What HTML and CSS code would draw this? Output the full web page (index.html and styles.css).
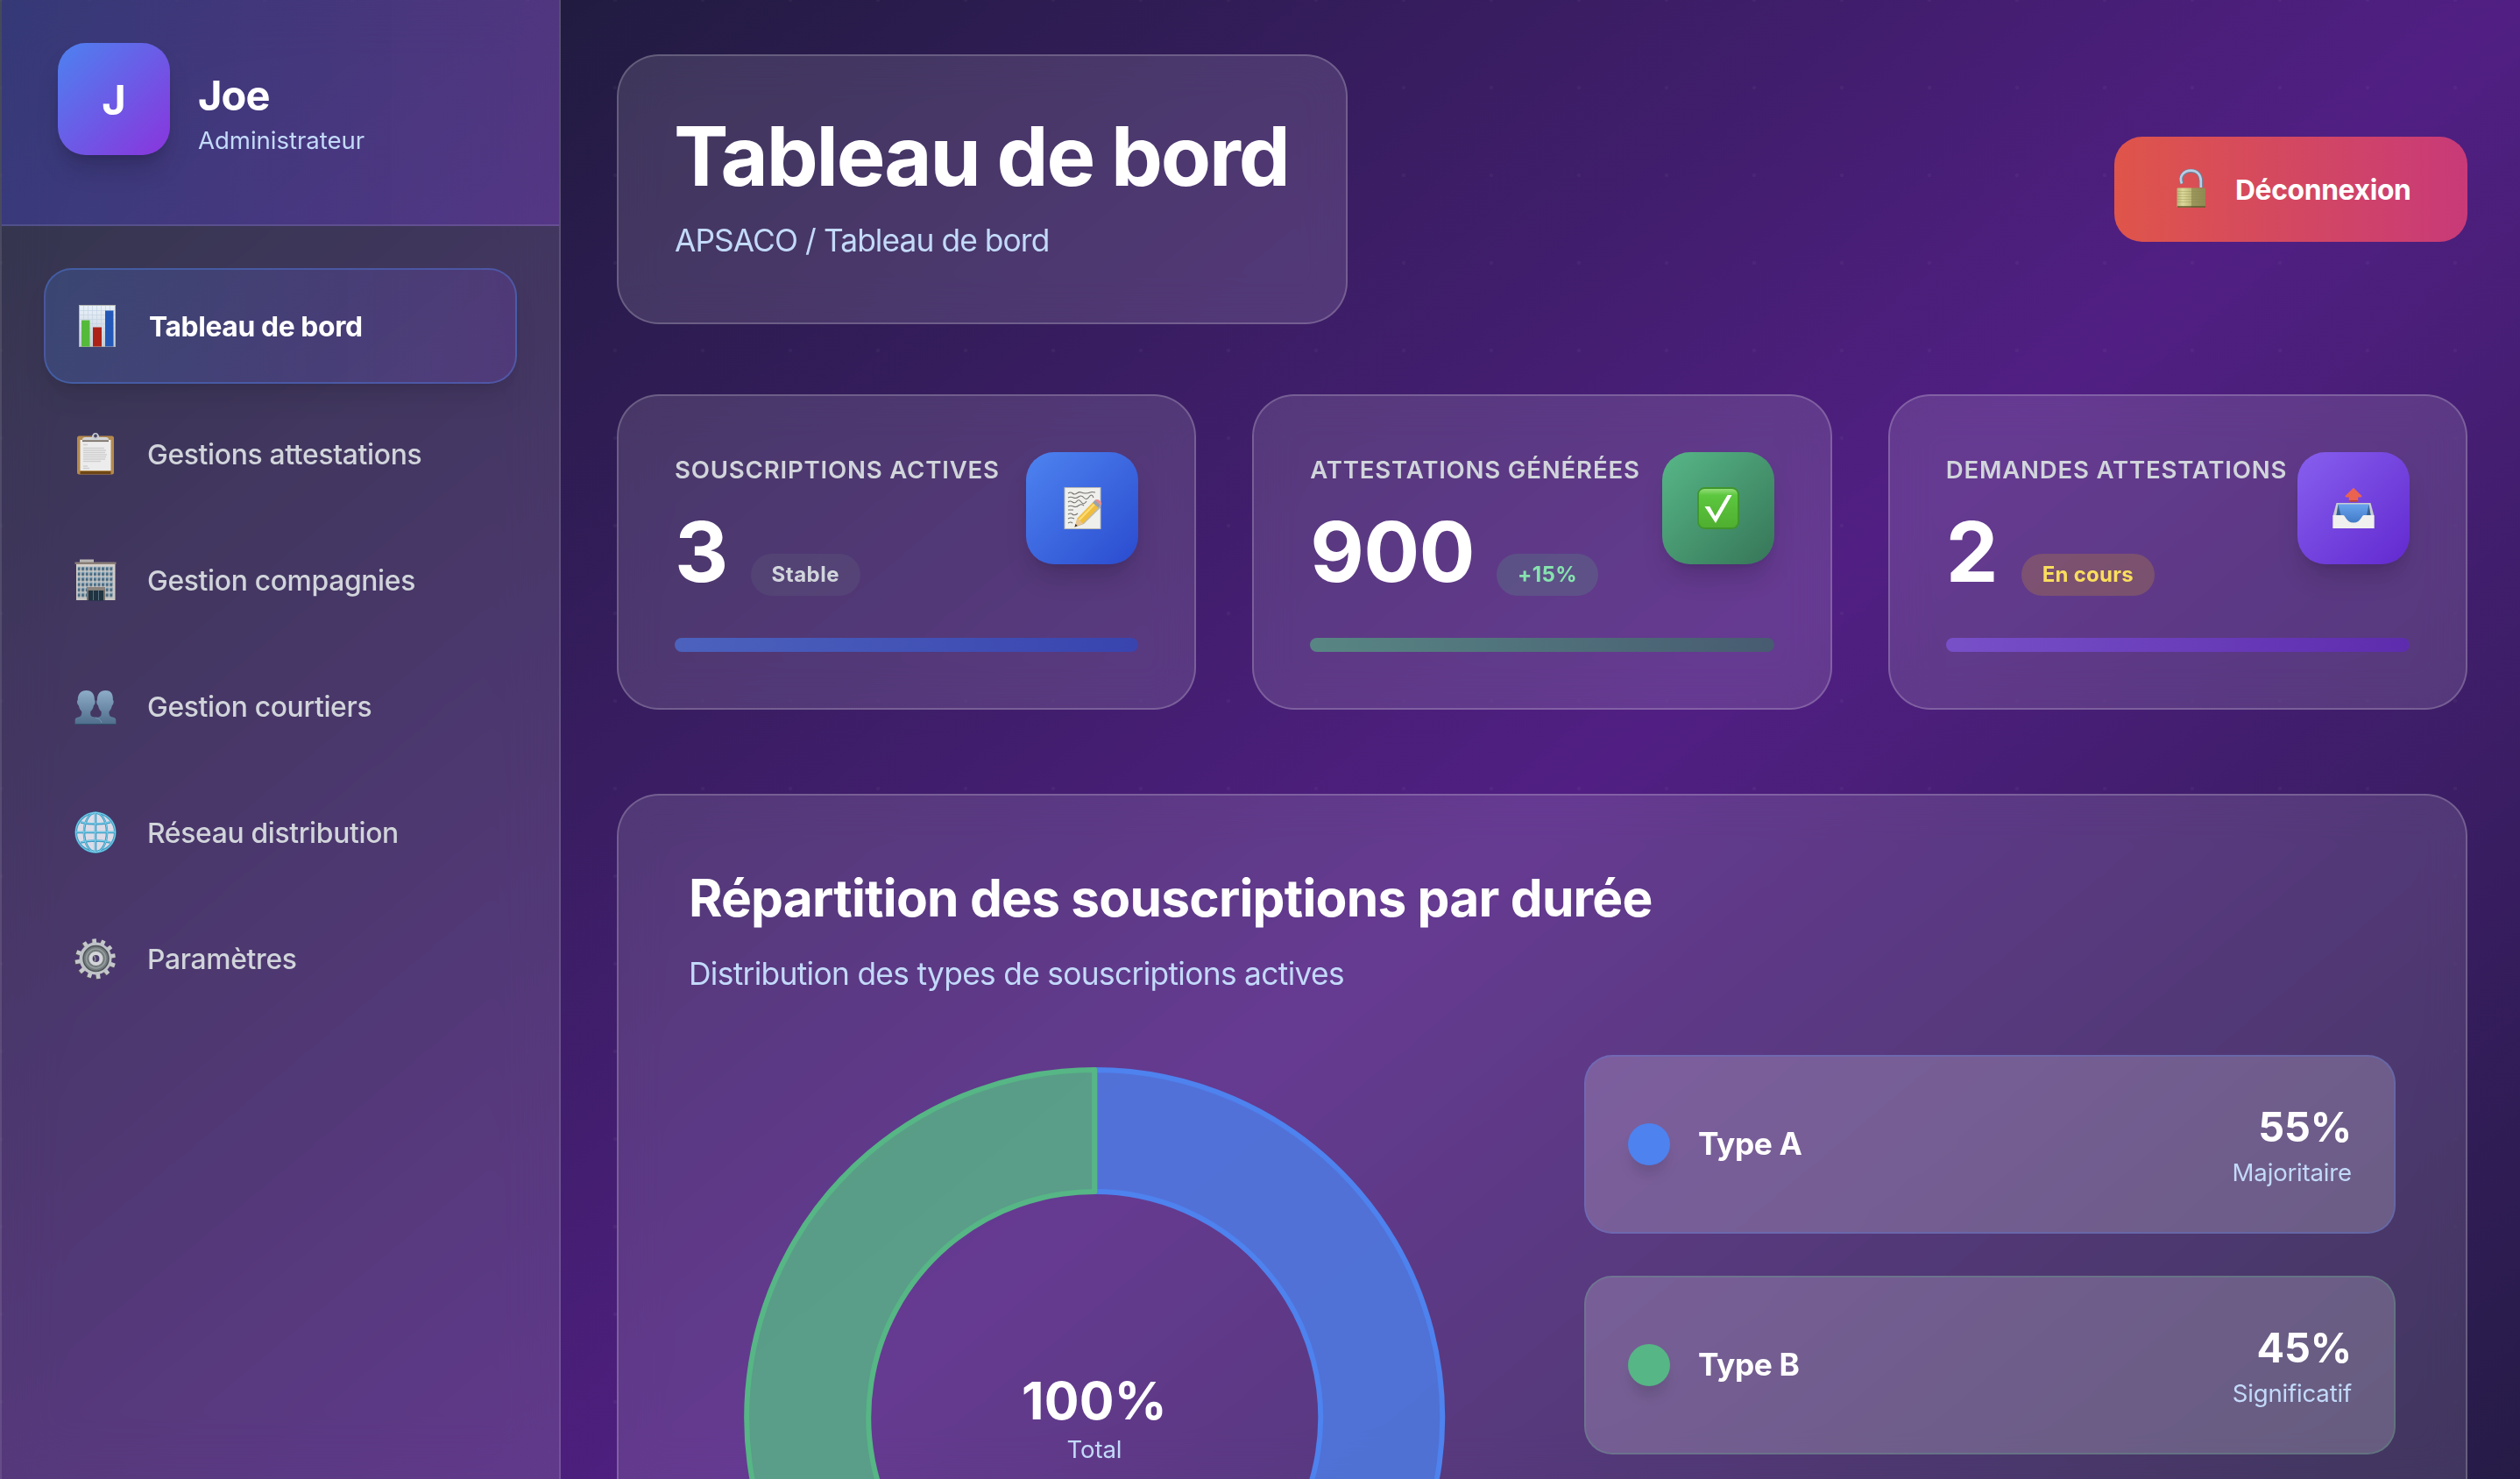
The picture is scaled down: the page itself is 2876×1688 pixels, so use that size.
FILE: index.html
```html
<!DOCTYPE html>
<html lang="fr">
<head>
<meta charset="utf-8">
<title>Tableau de bord</title>
<link rel="stylesheet" href="styles.css">
</head>
<body>
<div class="app">
  <aside class="sidebar">
    <div class="profile">
      <div class="avatar">J</div>
      <div class="profile-info">
        <div class="profile-name">Joe</div>
        <div class="profile-role">Administrateur</div>
      </div>
    </div>
    <nav class="nav">
      <a class="nav-item active">
        <svg class="emoji" viewBox="0 0 48 48">
          <defs><linearGradient id="paper" x1="0" y1="0" x2="0" y2="1"><stop offset="0" stop-color="#e9f1f9"/><stop offset="1" stop-color="#c3ccd6"/></linearGradient></defs>
          <rect x="3.5" y=".5" width="41" height="47" fill="url(#paper)" stroke="#b3b3ae"/>
          <path d="M8.500 1v46M13.500 1v46M18.500 1v46M23.500 1v46M28.500 1v46M33.500 1v46M38.500 1v46M4 6.500h40M4 11.500h40M4 16.500h40M4 21.500h40M4 26.500h40M4 31.500h40M4 36.500h40M4 41.500h40" stroke="#c4d4e4" stroke-width=".7"/>
          <rect x="6" y="17.500" width="9.500" height="30" fill="#55ba3a"/>
          <rect x="19" y="25.500" width="10" height="22" fill="#ad2217"/>
          <rect x="33" y="6.500" width="9.500" height="41" fill="#2458b8"/>
        </svg>
        <span>Tableau de bord</span>
      </a>
      <a class="nav-item">
        <svg class="emoji" viewBox="0 0 48 48">
          <rect x="3" y="3.500" width="42" height="44" rx="2.500" fill="#b58a4d"/>
          <rect x="6.500" y="44" width="35" height="3" fill="#6f4716"/>
          <path d="M6.500 8h35v35h-35z" fill="#ececec"/>
          <path d="M10 13.500h5M10 17.500h24M10 20h26M10 22.500h25M10 25h27M10 27.500h26M10 30h25M10 32.500h20M10 38h5M10 40.500h7" stroke="#cfcfcf" stroke-width="1.300"/>
          <path d="M9 10h30V7.500Q39 5 35.500 5H28a4 4 0 0 0-8 0h-7.500Q9 5 9 7.500z" fill="#d2d3d6"/>
          <path d="M9 9.300h30" stroke="#6e6258" stroke-width="1.600"/>
          <circle cx="24" cy="3.500" r="2.700" fill="#4a4560" stroke="#c5c8d0" stroke-width="1.600"/>
        </svg>
        <span>Gestions attestations</span>
      </a>
      <a class="nav-item">
        <svg class="emoji" viewBox="0 0 48 48">
          <defs>
            <linearGradient id="wall" x1="0" y1="0" x2="0" y2="1"><stop offset="0" stop-color="#d5d0c9"/><stop offset="1" stop-color="#c9c7c5"/></linearGradient>
            <pattern id="win" width="4.600" height="6" patternUnits="userSpaceOnUse" x="3.500" y="8.500"><rect width="3.100" height="4.600" fill="#426680"/><rect width="3.100" height="1.300" fill="#86abc4"/></pattern>
          </defs>
          <rect x="6" y=".5" width="16" height="4" fill="#b9b7b5"/>
          <rect x="2" y="5" width="44.500" height="42" fill="url(#wall)"/>
          <rect x=".5" y="3.500" width="47" height="2.500" fill="#8a7f78"/>
          <rect x="3.500" y="8.500" width="41.200" height="36" fill="url(#win)"/>
          <rect x="14" y="32" width="21" height="15" fill="#76706c"/>
          <rect x="14" y="32" width="21" height="3.500" fill="#8b837d"/>
          <path d="M16 36h17v11.500H16z" fill="#1f3340"/>
          <path d="M21.500 36v11M27.500 36v11" stroke="#587080" stroke-width="1"/>
        </svg>
        <span>Gestion compagnies</span>
      </a>
      <a class="nav-item">
        <svg class="emoji people" viewBox="0 0 48 48">
          <defs><linearGradient id="bust" gradientUnits="userSpaceOnUse" x1="0" y1="5" x2="0" y2="43"><stop offset="0" stop-color="#8cabc6"/><stop offset="1" stop-color="#4f6d8c"/></linearGradient></defs>
          <path d="M13.500 4C7 4 3.600 8.500 3.800 15c-1.300.6-.9 5 1 6.200.7 3.600 2 5.300 3.400 6.800.4 3-.4 5.200-2.300 6C4 34.900 .7 34.400 .7 38v5h30V36c-4-1.600-11-1-12.200-3.500-.4-1.600-.4-3.200-.2-4.500 1.600-1.400 2.900-3.200 3.600-6.800 1.900-1.200 2.300-5.600 1-6.200C23.100 8.500 20 4 13.500 4z" fill="url(#bust)"/>
          <path d="M35.500 4C29 4 25.800 8.500 26 15c-1.300.6-.9 5 1 6.200.7 3.600 2 5.400 3.600 6.800.2 1.300.2 2.900-.2 4.500C29.500 34 27 34.600 25 35l6 8h16.300V38c0-3.600-3.300-3.100-5.500-4-1.900-.8-2.700-3-2.300-6 1.300-1.400 2.700-3.200 3.400-6.800 1.900-1.200 2.300-5.600 1-6.200C44.100 8.500 42 4 35.500 4z" fill="url(#bust)"/>
          <path d="M24 35q6 1.500 7 6" fill="none" stroke="#7d9ab5" stroke-width=".8"/>
          <path d="M.7 42.500h46.600" stroke="#2f5068" stroke-width="1"/>
        </svg>
        <span>Gestion courtiers</span>
      </a>
      <a class="nav-item">
        <svg class="emoji" viewBox="0 0 48 48">
          <circle cx="24" cy="24" r="22.500" fill="#dcdce8"/>
          <g fill="none" stroke="#3f9ec4" stroke-width="2.600">
            <circle cx="24" cy="24" r="22.300"/>
            <path d="M24 1v46M1 24h46M7 12.500q17 4 34 0M7 35.500q17-4 34 0"/>
            <ellipse cx="24" cy="24" rx="13" ry="22.500"/>
          </g>
          <g fill="none" stroke="#7fd0ec" stroke-width="1">
            <circle cx="24" cy="24" r="22.600"/>
            <path d="M23.600 1v46M1 23.600h46M7 12q17 4 34 0M7 35q17-4 34 0"/>
            <ellipse cx="24" cy="24" rx="13.300" ry="22.500"/>
          </g>
        </svg>
        <span>Réseau distribution</span>
      </a>
      <a class="nav-item">
        <svg class="emoji" viewBox="0 0 48 48">
          <g stroke="#55534f" stroke-width="5.200" transform="translate(-.8 .6)"><path d="M24 24L22.500 1.500M24 24L33.500 3.500M24 24L42 10.500M24 24L46.500 20.500M24 24L46 32M24 24L38.500 41.500M24 24L27.500 47M24 24L16.500 45.500M24 24L6.500 39.500M24 24L1 28M24 24L2.500 16.500M24 24L11 5.500"/></g>
          <g stroke="#c4c7cc" stroke-width="4.600"><path d="M24 24L22.500 1.500M24 24L33.500 3.500M24 24L42 10.500M24 24L46.500 20.500M24 24L46 32M24 24L38.500 41.500M24 24L27.500 47M24 24L16.500 45.500M24 24L6.500 39.500M24 24L1 28M24 24L2.500 16.500M24 24L11 5.500"/></g>
          <circle cx="24" cy="24" r="18.500" fill="#bfc3c8"/>
          <circle cx="24.500" cy="24" r="14.500" fill="#747b7d" stroke="#4c5255" stroke-width="1.400"/>
          <circle cx="24.500" cy="24" r="11" fill="none" stroke="#959c9e" stroke-width="1.600"/>
          <circle cx="24.500" cy="24" r="6" fill="#493a6c" stroke="#d3d5d9" stroke-width="4.200"/>
          <path d="M22 20.500q3 3.500 1 7" fill="none" stroke="#8b8b90" stroke-width="1.600"/>
        </svg>
        <span>Paramètres</span>
      </a>
    </nav>
  </aside>

  <main class="main">
    <header class="topbar">
      <div class="glass heading">
        <h1>Tableau de bord</h1>
        <p>APSACO / Tableau de bord</p>
      </div>
      <button class="logout">
        <svg class="emoji" viewBox="0 0 48 48">
          <defs>
            <linearGradient id="brass" x1="0" x2="1"><stop offset="0" stop-color="#b8b577"/><stop offset=".2" stop-color="#dcd898"/><stop offset=".5" stop-color="#bdb978"/><stop offset=".52" stop-color="#9c985c"/><stop offset="1" stop-color="#8f8a50"/></linearGradient>
          </defs>
          <path d="M13.500 17.500C10 10 15 3 23.500 3 31 3 35 8 35 14.500V22" fill="none" stroke="#6c8299" stroke-width="4.600"/>
          <path d="M13 17.500C9.500 9.500 15 2.600 23.500 2.600 31 2.600 34.800 8 34.800 14.500V22" fill="none" stroke="#b9cfe6" stroke-width="2.600"/>
          <rect x="7.500" y="22.500" width="32.500" height="22" rx="1" fill="url(#brass)"/>
          <path d="M8 26.500h32M8 29.500h32M8 32.500h32M8 35.500h32M8 38.500h32" stroke="#8a864e" stroke-width=".5" opacity=".6"/>
          <path d="M8 44h32" stroke="#5f5a2c" stroke-width="1.500"/>
        </svg>
        <span>Déconnexion</span>
      </button>
    </header>

    <section class="stats">
      <article class="glass stat">
        <div class="stat-top">
          <div class="stat-body">
            <h3>Souscriptions actives</h3>
            <div class="stat-value"><strong>3</strong><span class="badge neutral">Stable</span></div>
          </div>
          <div class="tile blue">
            <svg class="emoji" viewBox="0 0 48 48">
              <rect x="4" y=".5" width="41" height="47" fill="#efefec" stroke="#b9b9b4"/>
              <path d="M8 7q3-2 5 0t5 0 5-1 5 1 5-1 6 0M8 12q3-1.500 6 0t6-1 6 1 6-1 5 1M8 17q2-2 5 0t5-1 5 1 6-1M8 22q3-1.500 6 0t6-1 6 0M8 26h6M8 31q3-2 5 0t6-1M8 36q3-2 7 0M8 41q3-2 5 0" fill="none" stroke="#76736f" stroke-width="1.100"/>
              <path d="M16.500 45.500l2.500-9L38 16.500l7.500 6.500L26 42z" fill="#5b5548" opacity=".35"/>
              <path d="M15.500 45.500l3-10L36 17.500l6.500 6L25 41.500z" fill="#f0bd3c"/>
              <path d="M20.500 37.500L38 19.500" stroke="#fbdc78" stroke-width="2.400"/>
              <path d="M15.500 45.500l3-10 6.500 6z" fill="#e8c593"/>
              <path d="M15.500 45.500l1-3.400 2.200 2z" fill="#2b2b2b"/>
              <path d="M36 17.500l3-3 6.500 6-3 3z" fill="#9aa3ab"/>
              <path d="M38.700 14.700q2.500-1.700 5.600.8 3 3 1.200 5.200z" fill="#ea8d8d"/>
            </svg>
          </div>
        </div>
        <div class="bar blue"></div>
      </article>
      <article class="glass stat">
        <div class="stat-top">
          <div class="stat-body">
            <h3>Attestations générées</h3>
            <div class="stat-value"><strong>900</strong><span class="badge up">+15%</span></div>
          </div>
          <div class="tile green">
            <svg class="emoji" viewBox="0 0 48 48">
              <defs><linearGradient id="ok" x1="0" y1="0" x2="0" y2="1"><stop offset="0" stop-color="#9be07f"/><stop offset=".18" stop-color="#5cc73f"/><stop offset="1" stop-color="#4fae2f"/></linearGradient></defs>
              <rect x="1" y="1" width="46" height="46" rx="7.500" fill="url(#ok)" stroke="#3f962a" stroke-width="1.800"/>
              <path d="M8.500 22h5.800l6.200 11L34.500 9h5L21 41z" fill="#fff"/>
            </svg>
          </div>
        </div>
        <div class="bar green"></div>
      </article>
      <article class="glass stat">
        <div class="stat-top">
          <div class="stat-body">
            <h3>Demandes attestations</h3>
            <div class="stat-value"><strong>2</strong><span class="badge pending">En cours</span></div>
          </div>
          <div class="tile violet">
            <svg class="emoji" viewBox="0 0 48 48">
              <defs><linearGradient id="tray" x1="0" y1="0" x2="0" y2="1"><stop offset="0" stop-color="#68a3ee"/><stop offset="1" stop-color="#3f78c4"/></linearGradient></defs>
              <path d="M4.500 18h39L47.500 33v14H.5V33z" fill="#c9ccd0"/>
              <path d="M6.500 19.500h35L44 34l-10 8H14L4 34z" fill="url(#tray)"/>
              <path d="M6.500 19.500L4.500 32h5zM41.500 19.500l2 12.500h-4.500z" fill="#2c4d78" opacity=".7"/>
              <path d="M.5 32H12c3 0 3.500 8.500 12 8.500S33 32 36 32h11.500v15H.5z" fill="#f0f0ee"/>
              <path d="M24 .8l9.700 9.400-1.200 1.300h-3.300v5H18.800v-5h-3.300l-1.200-1.300z" fill="#ea6350"/>
              <path d="M18.800 15.800h10.400" stroke="#b23c30" stroke-width="1.400"/>
            </svg>
          </div>
        </div>
        <div class="bar violet"></div>
      </article>
    </section>

    <section class="glass panel">
      <h2>Répartition des souscriptions par durée</h2>
      <p class="panel-sub">Distribution des types de souscriptions actives</p>
      <div class="panel-grid">
        <div class="chart">
          <svg class="donut" viewBox="0 0 926 828">
            <g stroke-width="6" stroke-linejoin="round">
              <path d="M463.300 17A397 397 0 1 1 340.600 791.600L383.600 659.400A258 258 0 1 0 463.300 156Z" fill="#4d80ea" fill-opacity=".8" stroke="#4e82ee"/>
              <path d="M340.600 791.600A397 397 0 0 1 463.300 17V156A258 258 0 0 0 383.600 659.400Z" fill="#57b787" fill-opacity=".8" stroke="#56b685"/>
            </g>
          </svg>
          <div class="chart-center"><strong>100%</strong><span>Total</span></div>
        </div>
        <div class="legend">
          <div class="legend-item a">
            <i class="dot"></i><span class="legend-name">Type A</span>
            <div class="legend-value"><strong>55%</strong><span>Majoritaire</span></div>
          </div>
          <div class="legend-item b">
            <i class="dot"></i><span class="legend-name">Type B</span>
            <div class="legend-value"><strong>45%</strong><span>Significatif</span></div>
          </div>
        </div>
      </div>
    </section>
  </main>
</div>
</body>
</html>
```
FILE: styles.css
```css
* { box-sizing: border-box; margin: 0; padding: 0; }

html, body { height: 1688px; overflow: hidden; }

body {
  font-family: "Inter", "Liberation Sans", sans-serif;
  color: #fff;
  background-color: #0f172a;
  background-image:
    radial-gradient(circle at 50px 50px, rgba(255, 255, 255, .035) 0 1.800px, transparent 2.600px),
    linear-gradient(to bottom right, #131a2d, #511f83 50%, #131a2d);
  background-size: 100px 100px, 2876px 2400px;
  background-position: 652px -50px, 0 0;
}

.app { display: flex; height: 1688px; overflow: hidden; }

.emoji { display: block; width: 48px; height: 48px; flex: none; overflow: visible; }
.emoji.people { margin-top: 3px; }

/* Sidebar */
.sidebar {
  width: 640px;
  flex: none;
  height: 1688px;
  border-left: 2px solid rgba(255, 255, 255, .1);
  border-right: 2px solid rgba(255, 255, 255, .13);
  background: rgba(255, 255, 255, .12);
  backdrop-filter: blur(32px);
}

.profile {
  display: flex;
  gap: 32px;
  height: 258px;
  padding: 49px 64px 0;
  border-bottom: 2px solid rgba(255, 255, 255, .12);
  background: linear-gradient(to right, rgba(66, 66, 220, .32), rgba(128, 52, 220, .3));
}

.avatar {
  width: 128px;
  height: 128px;
  border-radius: 32px;
  display: flex;
  align-items: center;
  justify-content: center;
  padding-top: 1px;
  font-size: 47px;
  font-weight: 700;
  background: linear-gradient(135deg, #4d82f0, #8a34dd);
  box-shadow: 0 20px 30px -6px rgba(0, 0, 0, .18), 0 8px 12px -8px rgba(0, 0, 0, .18);
}

.profile-info { padding-top: 29px; }
.profile-name { font-size: 47px; line-height: 62px; font-weight: 700; letter-spacing: -.018em; }
.profile-role { font-size: 27.600px; line-height: 40px; letter-spacing: -.002em; color: #c3dafa; }

.nav { display: flex; flex-direction: column; gap: 16px; padding: 48px; }

.nav-item {
  display: flex;
  align-items: center;
  gap: 35px;
  height: 128px;
  padding-left: 35px;
  border-radius: 32px;
  font-size: 31.800px;
  font-weight: 500;
  letter-spacing: -.01em;
  color: #d1d5db;
}

.nav-item.active {
  height: 132px;
  border: 2px solid rgba(79, 129, 236, .4);
  font-weight: 650;
  letter-spacing: -.012em;
  color: #fff;
  background: linear-gradient(to right, rgba(68, 112, 200, .28), rgba(120, 68, 190, .25));
  box-shadow: 0 20px 30px -6px rgba(0, 0, 0, .1), 0 8px 12px -6px rgba(0, 0, 0, .08);
}

/* Main column */
.main { flex: 1; padding: 62px 60px 0 64px; }

.glass {
  background: rgba(255, 255, 255, .12);
  border: 2px solid rgba(255, 255, 255, .2);
  border-radius: 48px;
  backdrop-filter: blur(24px);
}

.topbar { display: flex; align-items: center; justify-content: space-between; }

.heading { width: 834px; height: 308px; padding: 64px; white-space: nowrap; }
.heading h1 { font-size: 93.600px; line-height: 100px; font-weight: 700; letter-spacing: -.023em; margin-left: -1px; }
.heading p { margin-top: 19px; font-size: 35.300px; line-height: 56px; letter-spacing: -.0255em; color: #c3dafa; }

.logout {
  display: flex;
  align-items: center;
  gap: 26px;
  width: 403px;
  height: 120px;
  padding-left: 64px;
  border: 0;
  border-radius: 32px;
  font: 700 31.800px "Inter", "Liberation Sans", sans-serif;
  letter-spacing: -.011em;
  color: #fff;
  background: linear-gradient(to right, #df554a, #c83a78);
}

.stats { display: grid; grid-template-columns: repeat(3, 1fr); gap: 64px; margin-top: 80px; }

.stat { height: 360px; padding: 64px; }
.stat-top { display: flex; justify-content: space-between; height: 164px; }
.stat-body { width: 0; flex: 1; white-space: nowrap; }
.stat h3 {
  font-size: 27.600px;
  line-height: 41px;
  font-weight: 600;
  letter-spacing: .029em;
  text-transform: uppercase;
  color: #d1d5db;
}
.stat-value { display: flex; align-items: flex-end; gap: 26px; height: 98px; margin-top: 25px; }
.stat-value strong { font-size: 95px; line-height: 96px; margin-bottom: 2px; letter-spacing: -.008em; }

.badge {
  height: 48px;
  padding: 0 24px;
  border-radius: 24px;
  font-size: 24px;
  line-height: 48px;
  font-weight: 700;
  letter-spacing: .02em;
}
.badge.neutral { color: #d1d5db; background: rgba(107, 114, 128, .2); }
.badge.up { margin-left: -1px; color: #86e3ae; background: rgba(85, 179, 131, .2); }
.badge.pending { margin-left: 1px; color: #fade5d; background: rgba(234, 179, 8, .2); letter-spacing: .01em; }

.tile {
  width: 128px;
  height: 128px;
  flex: none;
  display: flex;
  align-items: center;
  justify-content: center;
  border-radius: 32px;
  box-shadow: 0 20px 30px -6px rgba(0, 0, 0, .15), 0 8px 12px -8px rgba(0, 0, 0, .14);
}
.tile.blue { background: linear-gradient(135deg, #4e83f0, #2a4bcf); }
.tile.green { background: linear-gradient(135deg, #57b787, #367558); }
.tile.violet { background: linear-gradient(135deg, #875fef, #6229cf); }

.bar { height: 16px; margin-top: 48px; border-radius: 8px; }
.bar.blue { background: linear-gradient(to right, #4c62bd, #3944af); }
.bar.green { background: linear-gradient(to right, #588684, #475b71); }
.bar.violet { background: linear-gradient(to right, #7850c8, #5d2cae); }

/* Distribution panel */
.panel { height: 1240px; margin-top: 96px; padding: 80px; }
.panel h2 { font-size: 58.600px; line-height: 74px; font-weight: 700; letter-spacing: -.0132em; }
.panel-sub { margin: 22px 0 64px; font-size: 35.300px; line-height: 56px; letter-spacing: -.019em; color: #c3dafa; }
.panel-grid { display: grid; grid-template-columns: 1fr 1fr; gap: 96px; }

.chart { position: relative; height: 828px; }
.donut { display: block; width: 926px; height: 828px; }
.chart-center {
  position: absolute;
  inset: 0;
  display: flex;
  flex-direction: column;
  align-items: center;
  justify-content: center;
}
.chart-center strong { font-size: 59px; line-height: 71px; letter-spacing: .005em; }
.chart-center span { font-size: 27.600px; line-height: 40px; letter-spacing: -.005em; color: #c3dafa; }

.legend { display: flex; flex-direction: column; gap: 48px; }
.legend-item {
  display: flex;
  align-items: center;
  height: 204px;
  padding: 0 48px;
  border: 2px solid;
  border-radius: 32px;
  background: rgba(255, 255, 255, .19);
}
.legend-item.a { border-color: rgba(90, 130, 235, .3); }
.legend-item.b { border-color: rgba(86, 182, 133, .25); }
.dot { width: 48px; height: 48px; border-radius: 50%; box-shadow: 0 14px 16px -4px rgba(0, 0, 0, .13); }
.legend-item.a .dot { background: #4e82ee; }
.legend-item.b .dot { background: #56b685; }
.legend-name { margin: 0 0 2px 32px; font-size: 35.300px; font-weight: 700; letter-spacing: -.01em; }
.legend-value { margin-left: auto; display: flex; flex-direction: column; align-items: flex-end; }
.legend-value strong { font-size: 46.800px; line-height: 65px; letter-spacing: -.005em; }
.legend-value span { font-size: 27.600px; line-height: 39px; letter-spacing: -.007em; color: #c3dafa; }
```
